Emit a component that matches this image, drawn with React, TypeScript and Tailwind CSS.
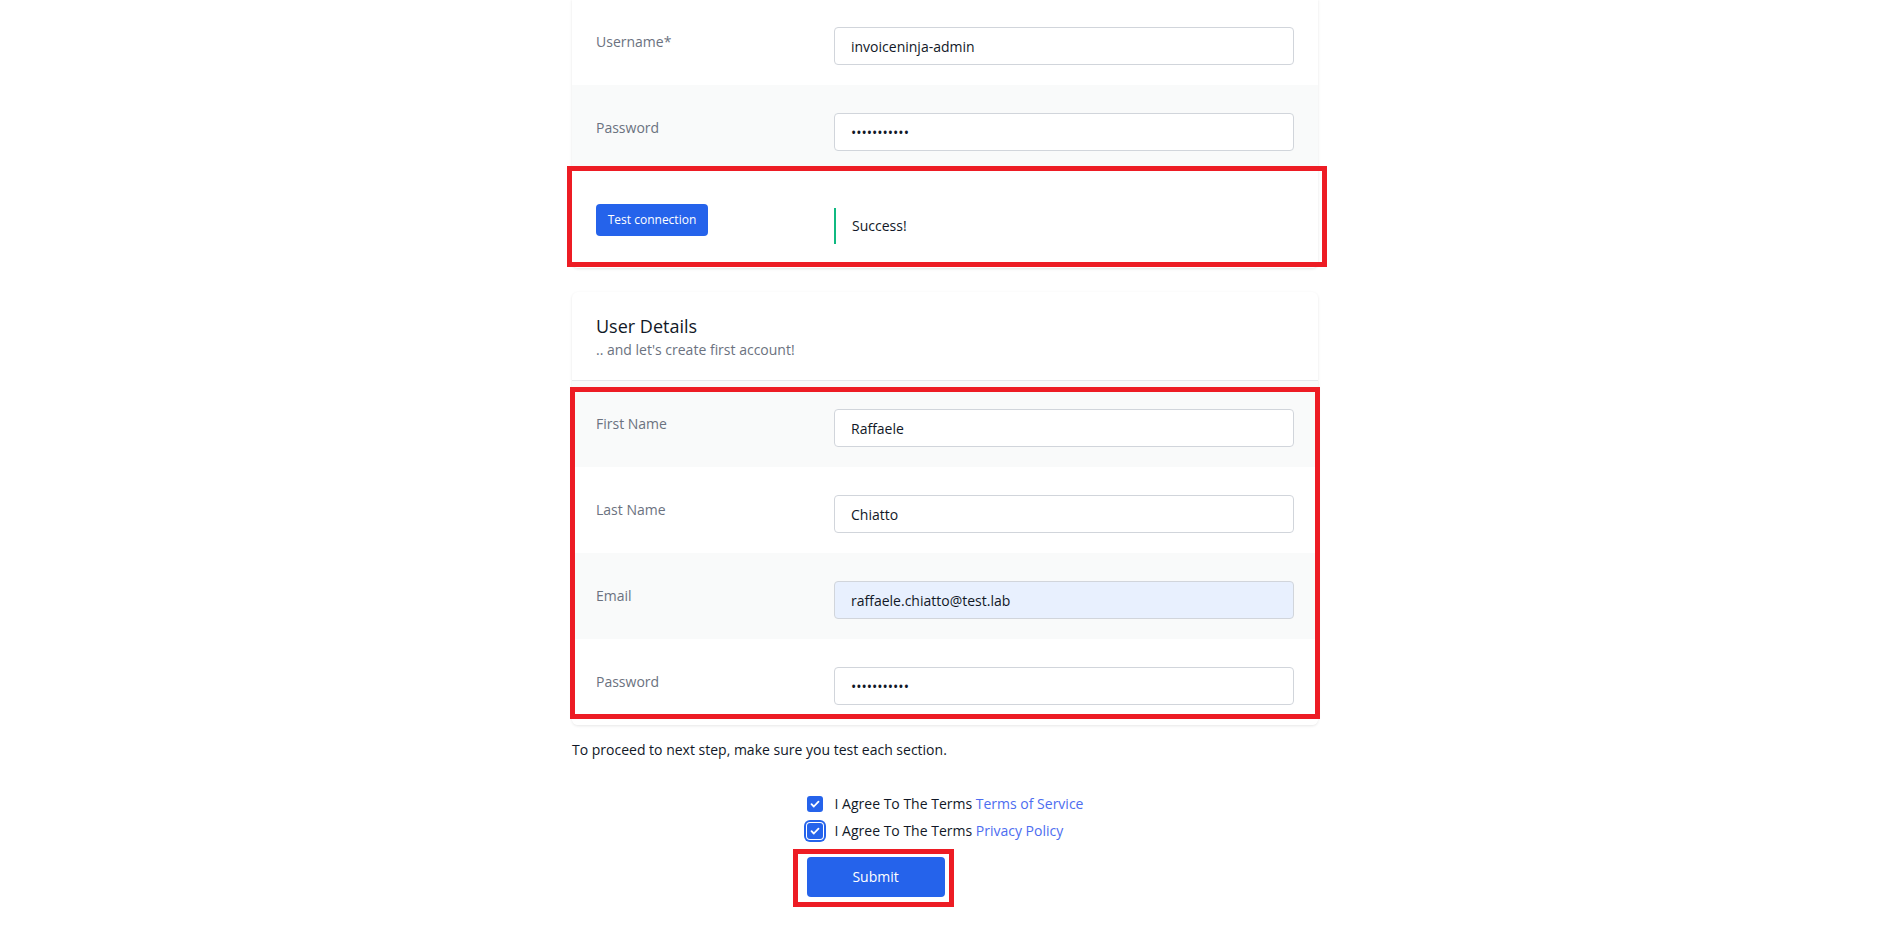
import React from 'react';

type Field = {
  label: string;
  value: string;
  type?: 'text' | 'password';
  autofill?: boolean;
};

const dbFields: Field[] = [
  { label: 'Username*', value: 'invoiceninja-admin' },
  { label: 'Password', value: 'secretpass1', type: 'password' },
];

const userFields: Field[] = [
  { label: 'First Name', value: 'Raffaele' },
  { label: 'Last Name', value: 'Chiatto' },
  { label: 'Email', value: 'raffaele.chiatto@test.lab', autofill: true },
  { label: 'Password', value: 'secretpass1', type: 'password' },
];

function Row({ field, striped }: { field: Field; striped: boolean }) {
  return (
    <div
      className={`grid h-[86px] grid-cols-3 gap-4 px-6 pt-5 ${striped ? 'bg-[#f9fafa]' : 'bg-white'}`}
    >
      <dt className="pt-[13px] text-sm leading-5 text-[#6b7280]">{field.label}</dt>
      <dd className="col-span-2 pt-[8px]">
        <input
          readOnly
          type={field.type ?? 'text'}
          defaultValue={field.value}
          className={`h-[38px] w-full rounded border border-[#d1d5db] px-4 text-sm text-[#111827] outline-none ${
            field.autofill ? 'bg-[#e8f0fe]' : 'bg-white'
          }`}
        />
      </dd>
    </div>
  );
}

function Check({ focused }: { focused?: boolean }) {
  return (
    <span
      className={`flex size-4 items-center justify-center rounded-[3px] bg-[#2563eb] ${
        focused ? 'ring-2 ring-[#2563eb] ring-offset-1' : ''
      }`}
    >
      <svg viewBox="0 0 16 16" className="size-4" fill="none">
        <path
          d="M4.5 8.2l2.3 2.3 4.7-4.9"
          stroke="white"
          strokeWidth="1.8"
          strokeLinecap="round"
          strokeLinejoin="round"
        />
      </svg>
    </span>
  );
}

// red annotation frames drawn over the screenshot
function Frame({ className }: { className: string }) {
  return <div className={`pointer-events-none absolute border-[5px] border-[#ed1c24] ${className}`} />;
}

export default function App() {
  return (
    <div className="min-h-screen bg-white pr-[9px] font-['Open_Sans',sans-serif] text-[#111827]">
      <div className="relative mx-auto -mt-px w-[746px]">
        {/* database card, scrolled so its top is off screen */}
        <div className="overflow-hidden rounded-b-md bg-white shadow-[0_1px_3px_rgba(0,0,0,0.1)]">
          <dl>
            {dbFields.map((f, i) => (
              <Row key={f.label} field={f} striped={i % 2 === 1} />
            ))}
            <div className="grid h-[97px] grid-cols-3 gap-4 bg-white px-6 pt-5">
              <dt className="pt-[13px]">
                <button
                  type="button"
                  className="h-8 w-[112px] rounded bg-[#2563eb] text-xs font-medium text-white"
                >
                  Test connection
                </button>
              </dt>
              <dd className="col-span-2 pt-[17px]">
                <div className="border-l-2 border-[#10b981] py-2 pl-4 text-sm leading-5">
                  Success!
                </div>
              </dd>
            </div>
          </dl>
        </div>

        {/* user details card */}
        <div className="mt-6 overflow-hidden rounded-md bg-white shadow-[0_1px_3px_rgba(0,0,0,0.1)]">
          <div className="border-b border-[#e5e7eb] px-6 py-5">
            <h3 className="text-lg leading-7 text-[#111827]">User Details</h3>
            <p className="text-sm leading-5 text-[#6b7280]">.. and let's create first account!</p>
          </div>
          <dl>
            {userFields.map((f, i) => (
              <Row key={f.label} field={f} striped={i % 2 === 0} />
            ))}
          </dl>
        </div>

        <p className="mt-[15px] text-sm leading-5">
          To proceed to next step, make sure you test each section.
        </p>

        <div className="mt-[30px] flex justify-center">
          <div className="flex flex-col items-start">
            <label className="flex h-[27px] items-center gap-3 text-sm">
              <Check />
              <span>
                I Agree To The Terms <span className="text-[#4d6df0]">Terms of Service</span>
              </span>
            </label>
            <label className="flex h-[27px] items-center gap-3 text-sm">
              <Check focused />
              <span>
                I Agree To The Terms <span className="text-[#4d6df0]">Privacy Policy</span>
              </span>
            </label>
            <button
              type="button"
              className="mt-[13px] h-10 w-[138px] rounded bg-[#2563eb] text-sm font-medium text-white"
            >
              Submit
            </button>
          </div>
        </div>

        <Frame className="left-[-5px] top-[167px] h-[101px] w-[760px]" />
        <Frame className="left-[-2px] top-[388px] h-[332px] w-[750px]" />
        <Frame className="left-[221px] top-[850px] h-[58px] w-[161px]" />
      </div>
    </div>
  );
}
